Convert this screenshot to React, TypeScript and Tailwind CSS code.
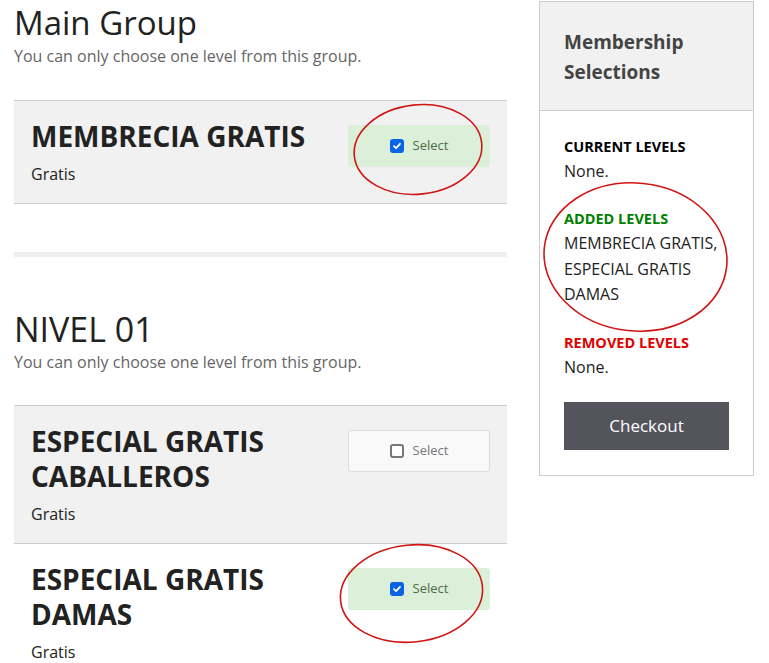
import React from "react";

const font = { fontFamily: '"Open Sans", "Noto Sans", Arial, sans-serif' };

function Check({ checked }: { checked: boolean }) {
  if (checked) {
    return (
      <span className="flex h-[14px] w-[14px] items-center justify-center rounded-[3px] bg-[#0b63e5]">
        <svg width="10" height="10" viewBox="0 0 10 10" fill="none">
          <path d="M2 5.2 4.1 7.2 8 2.8" stroke="#fff" strokeWidth="1.8" strokeLinecap="round" strokeLinejoin="round" />
        </svg>
      </span>
    );
  }
  return <span className="h-[14px] w-[14px] rounded-[3px] border-2 border-[#767676] bg-white" />;
}

function SelectButton({ checked }: { checked: boolean }) {
  return (
    <div
      className={
        checked
          ? "mt-[6px] flex h-[42px] w-[142px] shrink-0 items-center justify-center gap-[9px] rounded-[3px] bg-[#dcefd8] text-[13px] text-[#4d6b4a]"
          : "mt-[6px] flex h-[42px] w-[142px] shrink-0 items-center justify-center gap-[9px] rounded-[3px] border border-[#dddddd] bg-[#f9f9f9] text-[13px] text-[#777]"
      }
    >
      <Check checked={checked} />
      <span>Select</span>
    </div>
  );
}

function Level({ lines, checked, shaded }: { lines: string[]; checked: boolean; shaded: boolean }) {
  return (
    <div className={shaded ? "flex justify-between bg-[#f1f1f1] px-[17px] pt-[18px] pb-[17px]" : "flex justify-between px-[17px] pt-[18px] pb-[8px]"}>
      <div>
        <h3 className="text-[28px] leading-[35px] font-bold text-[#222]">
          {lines.map((l) => (
            <div key={l}>{l}</div>
          ))}
        </h3>
        <p className="mt-[8px] text-[16px] leading-[24px] text-[#222]">Gratis</p>
      </div>
      <SelectButton checked={checked} />
    </div>
  );
}

function Ring({ className }: { className: string }) {
  return (
    <svg className={"pointer-events-none absolute " + className} viewBox="0 0 100 100" preserveAspectRatio="none">
      <ellipse cx="50" cy="50" rx="48.5" ry="48" fill="none" stroke="#d01515" strokeWidth="1.6" vectorEffect="non-scaling-stroke" />
    </svg>
  );
}

export default function App() {
  return (
    <div className="relative flex h-[663px] w-[769px] overflow-hidden bg-white" style={font}>
      <div className="ml-[14px] w-[493px]">
        <h2 className="text-[33px] leading-[46px] text-[#222]">Main Group</h2>
        <p className="text-[16px] leading-[20px] text-[#666]">You can only choose one level from this group.</p>
        <div className="mt-[34px] border-y border-[#cccccc]">
          <Level lines={["MEMBRECIA GRATIS"]} checked shaded />
        </div>
        <div className="mt-[48px] h-[5px] bg-[#efefef]" />
        <h2 className="mt-[49px] text-[34px] leading-[46px] text-[#222]">NIVEL 01</h2>
        <p className="text-[16px] leading-[20px] text-[#666]">You can only choose one level from this group.</p>
        <div className="mt-[33px] border-t border-[#cccccc]">
          <div className="border-b border-[#cccccc]">
            <Level lines={["ESPECIAL GRATIS", "CABALLEROS"]} checked={false} shaded />
          </div>
          <Level lines={["ESPECIAL GRATIS", "DAMAS"]} checked shaded={false} />
        </div>
      </div>

      <div className="mt-[1px] ml-[32px] h-[475px] w-[215px] border border-[#cccccc]">
        <div className="border-b border-[#cccccc] bg-[#f1f1f1] px-[24px] pt-[25px] pb-[23px]">
          <h3 className="text-[19px] leading-[30px] font-bold text-[#444]">
            Membership
            <br />
            Selections
          </h3>
        </div>
        <div className="px-[24px] pt-[23px] text-[16px] leading-[25px] text-[#222]">
          <div className="text-[14.5px] font-bold text-black">CURRENT LEVELS</div>
          <div>None.</div>
          <div className="mt-[22px] text-[14.5px] font-bold text-[#008000]">ADDED LEVELS</div>
          <div className="leading-[25.5px]">
            MEMBRECIA GRATIS,
            <br />
            ESPECIAL GRATIS
            <br />
            DAMAS
          </div>
          <div className="mt-[22px] text-[14.5px] font-bold text-[#e00000]">REMOVED LEVELS</div>
          <div>None.</div>
          <button className="mt-[22px] h-[48px] w-[165px] bg-[#54555c] text-[17px] text-white">Checkout</button>
        </div>
      </div>

      <Ring className="left-[352px] top-[103px] h-[93px] w-[132px] -rotate-6" />
      <Ring className="left-[541px] top-[180px] h-[154px] w-[189px] rotate-6" />
      <Ring className="left-[338px] top-[543px] h-[101px] w-[147px] -rotate-6" />
    </div>
  );
}
